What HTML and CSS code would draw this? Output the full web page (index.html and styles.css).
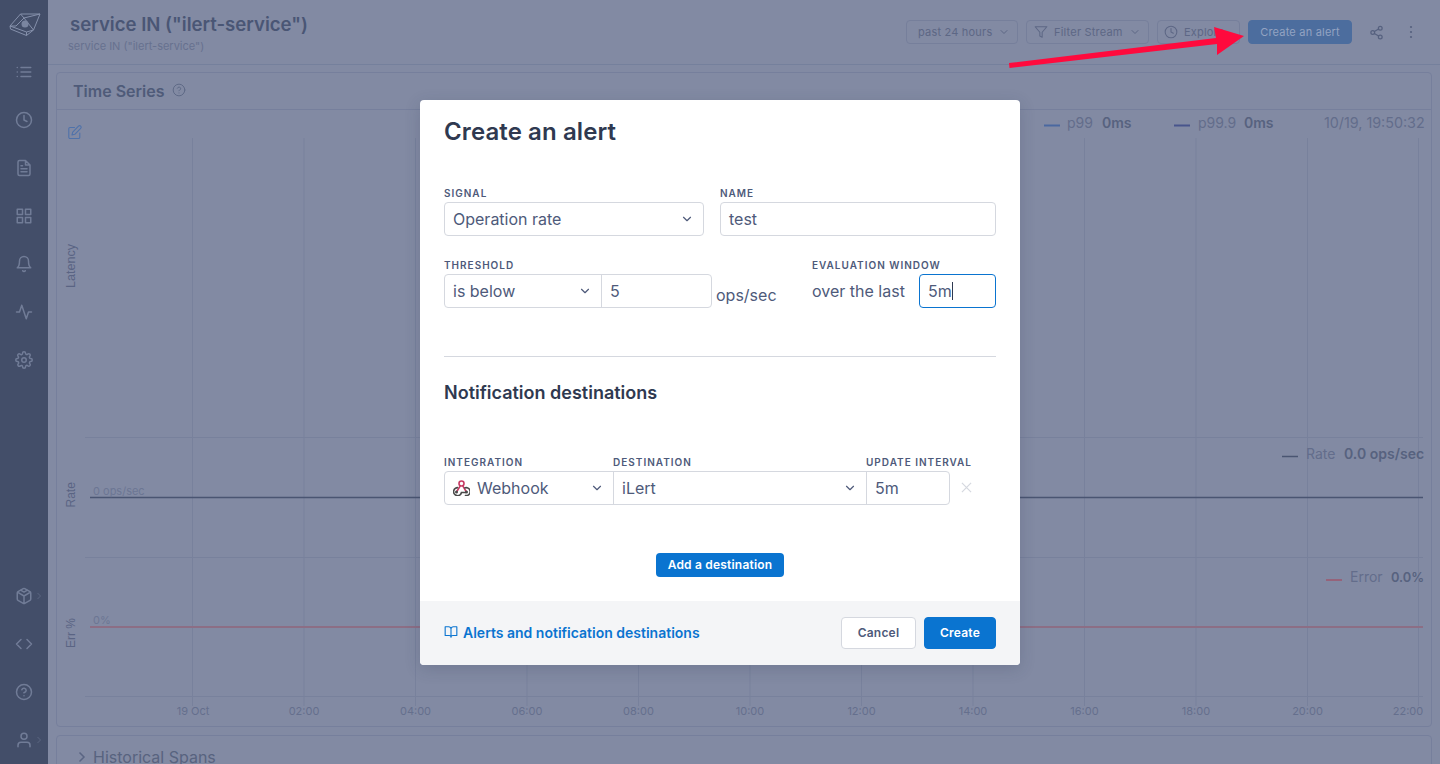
FILE: index.html
```html
<!DOCTYPE html>
<html lang="en">
<head>
<meta charset="utf-8">
<title>Create an alert</title>
<link rel="stylesheet" href="styles.css">
</head>
<body>
<div class="app">
  <nav class="sidebar">
    <div class="nav-group">
      <div class="nav-item"><svg class="logo" width="34" height="26" viewBox="0 0 34 26"><path d="M1 15 11.500 3H31l-6.500 16-7 5.500-16-6.500zM11.500 3 15 7 31 3M15 7l9.500 12M15 7 7 15 1 15M1 15 17.500 21l7-2M17.500 21v3.500"/><circle cx="16" cy="13" r="3.500"/></svg></div>
      <div class="nav-item"><svg class="ico" viewBox="0 0 24 24"><path d="M8 6h13M8 12h13M8 18h13M3 6h.01M3 12h.01M3 18h.01"/></svg></div>
      <div class="nav-item"><svg class="ico" viewBox="0 0 24 24"><circle cx="12" cy="12" r="10"/><path d="M12 6v6l4 2"/></svg></div>
      <div class="nav-item"><svg class="ico" viewBox="0 0 24 24"><path d="M14 2H6a2 2 0 0 0-2 2v16a2 2 0 0 0 2 2h12a2 2 0 0 0 2-2V8zM14 2v6h6M16 13H8M16 17H8M10 9H8"/></svg></div>
      <div class="nav-item"><svg class="ico" viewBox="0 0 24 24"><rect x="3" y="3" width="7" height="7"/><rect x="14" y="3" width="7" height="7"/><rect x="14" y="14" width="7" height="7"/><rect x="3" y="14" width="7" height="7"/></svg></div>
      <div class="nav-item"><svg class="ico" viewBox="0 0 24 24"><path d="M18 8A6 6 0 0 0 6 8c0 7-3 9-3 9h18s-3-2-3-9M13.700 21a2 2 0 0 1-3.400 0"/></svg></div>
      <div class="nav-item"><svg class="ico" viewBox="0 0 24 24"><path d="M22 12h-4l-3 9L9 3l-3 9H2"/></svg></div>
      <div class="nav-item"><svg class="ico" viewBox="0 0 24 24"><circle cx="12" cy="12" r="3"/><path d="M19.400 15a1.650 1.650 0 0 0 .33 1.820l.06.06a2 2 0 1 1-2.830 2.830l-.06-.06a1.650 1.650 0 0 0-2.820 1.170V21a2 2 0 1 1-4 0v-.09a1.650 1.650 0 0 0-2.820-1.170l-.06.06a2 2 0 1 1-2.830-2.830l.06-.06a1.650 1.650 0 0 0-1.170-2.820H3a2 2 0 1 1 0-4h.09a1.650 1.650 0 0 0 1.170-2.820l-.06-.06a2 2 0 1 1 2.830-2.830l.06.06a1.650 1.650 0 0 0 1.820.33H9a1.650 1.650 0 0 0 1-1.510V3a2 2 0 1 1 4 0v.09a1.650 1.650 0 0 0 2.820 1.170l.06-.06a2 2 0 1 1 2.830 2.830l-.06.06a1.650 1.650 0 0 0-.33 1.820V9a1.650 1.650 0 0 0 1.510 1H21a2 2 0 1 1 0 4h-.09a1.650 1.650 0 0 0-1.510 1z"/></svg></div>
    </div>
    <div class="nav-group">
      <div class="nav-item"><svg class="ico" viewBox="0 0 24 24"><path d="M21 16V8a2 2 0 0 0-1-1.730l-7-4a2 2 0 0 0-2 0l-7 4A2 2 0 0 0 3 8v8a2 2 0 0 0 1 1.730l7 4a2 2 0 0 0 2 0l7-4A2 2 0 0 0 21 16zM7.500 4.210l4.500 2.600 4.500-2.600M3.270 6.960 12 12.010l8.730-5.050M12 22.080V12"/></svg><svg class="nav-more" viewBox="0 0 6 8"><path d="M1.500 1 4.500 4 1.500 7"/></svg></div>
      <div class="nav-item"><svg class="ico" viewBox="0 0 24 24"><path d="M16 18l6-6-6-6M8 6l-6 6 6 6"/></svg></div>
      <div class="nav-item"><svg class="ico" viewBox="0 0 24 24"><circle cx="12" cy="12" r="10"/><path d="M9.090 9a3 3 0 0 1 5.830 1c0 2-3 3-3 3M12 17h.01"/></svg></div>
      <div class="nav-item"><svg class="ico" viewBox="0 0 24 24"><path d="M20 21v-2a4 4 0 0 0-4-4H8a4 4 0 0 0-4 4v2"/><circle cx="12" cy="7" r="4"/></svg><svg class="nav-more" viewBox="0 0 6 8"><path d="M1.500 1 4.500 4 1.500 7"/></svg></div>
    </div>
  </nav>

  <main class="main">
    <header class="topbar">
      <div class="heading">
        <h1 class="page-title">service IN ("ilert-service")</h1>
        <div class="page-sub">service IN ("ilert-service")</div>
      </div>
      <div class="actions">
        <div class="btn btn-range">past 24 hours <svg class="chev" viewBox="0 0 24 24"><path d="M6 9l6 6 6-6"/></svg></div>
        <div class="btn btn-filter"><svg class="btn-ico" viewBox="0 0 24 24"><path d="M22 3H2l8 9.460V19l4 2v-8.540z"/></svg>Filter Stream <svg class="chev" viewBox="0 0 24 24"><path d="M6 9l6 6 6-6"/></svg></div>
        <div class="btn btn-explore"><svg class="btn-ico" viewBox="0 0 24 24"><circle cx="12" cy="12" r="10"/><path d="M12 6v6l4 2"/></svg>Explore</div>
        <div class="btn btn-primary">Create an alert</div>
        <svg class="tool share" viewBox="0 0 24 24"><circle cx="18" cy="5" r="3"/><circle cx="6" cy="12" r="3"/><circle cx="18" cy="19" r="3"/><path d="M8.590 13.510l6.830 3.980M15.410 6.510l-6.820 3.980"/></svg>
        <svg class="tool dots" viewBox="0 0 4 14"><circle cx="2" cy="2" r="1.100"/><circle cx="2" cy="7" r="1.100"/><circle cx="2" cy="12" r="1.100"/></svg>
      </div>
    </header>

    <section class="panel panel-chart">
      <div class="panel-head">
        <h2 class="panel-title">Time Series</h2>
        <svg class="help" viewBox="0 0 24 24"><circle cx="12" cy="12" r="10"/><path d="M9.090 9a3 3 0 0 1 5.830 1c0 2-3 3-3 3M12 17h.01"/></svg>
      </div>
      <svg class="chart" viewBox="57 110 1374 615" width="1374" height="615">
        <g class="grid">
          <path d="M192.500 138V706M304 138V706M415.500 138V706M527 138V706M638.500 138V706M750 138V706M861.500 138V706M973 138V706M1084.500 138V706M1196 138V706M1307.500 138V706M1418.500 138V706"/>
          <path d="M85 437.500H1423M85 557.500H1423M85 696.500H1423"/>
        </g>
        <path class="series-rate" d="M90 497.500H1423"/>
        <path class="series-err" d="M90 627H1423"/>
        <g class="edit" transform="translate(68 125)">
          <path d="M6.500 2.500H2A1.200 1.200 0 0 0 .8 3.700v8.600A1.200 1.200 0 0 0 2 13.500h8.600a1.200 1.200 0 0 0 1.200-1.200V8M10.500 1.200a1.400 1.400 0 0 1 2.200 2.200L6.800 9.300l-2.800.7.700-2.800z"/>
        </g>
        <g class="axis-side">
          <text class="lat" transform="translate(75 288) rotate(-90)">Latency</text>
          <text transform="translate(75 507.500) rotate(-90)">Rate</text>
          <text transform="translate(75 648) rotate(-90)">Err %</text>
        </g>
        <g class="axis-value">
          <text x="93" y="495">0 ops/sec</text>
          <text x="93" y="624">0%</text>
        </g>
        <g class="axis-time">
          <text x="193" y="715">19 Oct</text><text x="304" y="715">02:00</text><text x="415.500" y="715">04:00</text><text x="527" y="715">06:00</text><text x="638.500" y="715">08:00</text><text x="750" y="715">10:00</text><text x="861.500" y="715">12:00</text><text x="973" y="715">14:00</text><text x="1084.500" y="715">16:00</text><text x="1196" y="715">18:00</text><text x="1307.500" y="715">20:00</text><text x="1408" y="715">22:00</text>
        </g>
        <g class="legend">
          <path class="key-p99" d="M1044 125.500H1060"/><text x="1067" y="128">p99</text><text class="val" x="1102" y="128">0ms</text>
          <path class="key-p999" d="M1174 125.500H1190"/><text x="1198" y="128">p99.9</text><text class="val" x="1244" y="128">0ms</text>
          <text class="stamp" x="1324" y="127.500">10/19, 19:50:32</text>
          <path class="series-rate" d="M1282 456.500H1298"/><text x="1306" y="459">Rate</text><text class="val" x="1344" y="459">0.0 ops/sec</text>
          <path class="key-err" d="M1326 580H1342"/><text x="1350" y="582">Error</text><text class="val val-pct" x="1391" y="582">0.0%</text>
        </g>
      </svg>
    </section>

    <section class="panel panel-spans">
      <svg class="expand" viewBox="0 0 8 12"><path d="M1.500 1.500 6 6l-4.500 4.500"/></svg>
      <h2 class="spans-title">Historical Spans</h2>
    </section>
  </main>
</div>

<svg class="arrow" viewBox="0 0 250 50" width="250" height="50"><path d="M9 41 216 16 214 5 244 14 217 33 217 22 9.500 46z"/></svg>

<div class="modal" role="dialog">
  <div class="modal-body">
    <h2 class="modal-title">Create an alert</h2>
    <div class="row row-signal">
      <div class="field field-signal">
        <div class="label">Signal</div>
        <div class="control select"><span>Operation rate</span><svg class="caret" viewBox="0 0 24 24"><path d="M6 9l6 6 6-6"/></svg></div>
      </div>
      <div class="field field-name">
        <div class="label">Name</div>
        <div class="control">test</div>
      </div>
    </div>
    <div class="row row-threshold">
      <div class="field">
        <div class="label">Threshold</div>
        <div class="inline">
          <div class="joined threshold">
            <div class="cell select w-below"><span>is below</span><svg class="caret" viewBox="0 0 24 24"><path d="M6 9l6 6 6-6"/></svg></div>
            <div class="cell grow">5</div>
          </div>
          <span class="unit">ops/sec</span>
        </div>
      </div>
      <div class="field field-window">
        <div class="label">Evaluation window</div>
        <div class="inline window">
          <span class="over">over the last</span>
          <div class="control focused">5m<i class="cursor"></i></div>
        </div>
      </div>
    </div>
    <hr class="rule">
    <h3 class="section-title">Notification destinations</h3>
    <div class="dest-labels">
      <div class="label w-int">Integration</div>
      <div class="label w-dest">Destination</div>
      <div class="label">Update interval</div>
    </div>
    <div class="dest-row">
      <div class="joined dest">
        <div class="cell select w-int">
          <svg class="hook" viewBox="0 0 17 16"><circle class="hook-ring" cx="8.500" cy="3.500" r="2.500"/><path class="hook-pink" d="M7.300 5.800 3.500 12M9.700 5.800 13.500 12"/><path class="hook-dark" d="M5.200 7.700A4 4 0 1 0 8.500 12.500H13"/><path class="hook-dark" d="M11.300 8.100A4 4 0 1 1 11.800 15.400"/><circle class="hook-dot" cx="3.500" cy="12" r="1.500"/><circle class="hook-dot" cx="13.500" cy="12" r="1.500"/></svg>
          <span class="grow">Webhook</span><svg class="caret" viewBox="0 0 24 24"><path d="M6 9l6 6 6-6"/></svg>
        </div>
        <div class="cell select w-dest"><span>iLert</span><svg class="caret" viewBox="0 0 24 24"><path d="M6 9l6 6 6-6"/></svg></div>
        <div class="cell grow">5m</div>
      </div>
      <svg class="remove" viewBox="0 0 12 12"><path d="M1 1l10 10M11 1 1 11"/></svg>
    </div>
    <div class="add-row"><div class="btn-add">Add a destination</div></div>
  </div>
  <footer class="modal-foot">
    <div class="doc-link"><svg class="book" viewBox="0 0 24 24"><path d="M2 3h6a4 4 0 0 1 4 4v14a3 3 0 0 0-3-3H2zM22 3h-6a4 4 0 0 0-4 4v14a3 3 0 0 1 3-3h7z"/></svg>Alerts and notification destinations</div>
    <div class="foot-actions">
      <div class="btn-cancel">Cancel</div>
      <div class="btn-create">Create</div>
    </div>
  </footer>
</div>
</body>
</html>
```

FILE: styles.css
```css
* { box-sizing: border-box; }
html, body { margin: 0; height: 100%; overflow: hidden; }
body { font-family: Inter, "Liberation Sans", sans-serif; background: #828aa3; color: #4a5675; }
h1, h2, h3 { margin: 0; }

.app { display: flex; height: 764px; overflow: hidden; }

/* sidebar */
.sidebar { width: 48px; flex: none; background: #434e69; display: flex; flex-direction: column; justify-content: space-between; }
.nav-item { height: 48px; display: flex; align-items: center; justify-content: center; position: relative; }
.ico { width: 18px; height: 18px; fill: none; stroke: #717c97; stroke-width: 2; stroke-linecap: round; stroke-linejoin: round; }
.logo { margin-left: 3px; fill: none; stroke: #8590ab; stroke-width: 1; stroke-linejoin: round; }
.logo circle { fill: #7a85a0; stroke: none; }
.nav-more { position: absolute; left: 36px; top: 20px; width: 6px; height: 8px; fill: none; stroke: #5b6681; stroke-width: 1; }

/* top bar */
.main { flex: 1; min-width: 0; padding: 0 8px; }
.topbar { height: 65px; margin: 0 -8px; padding: 0 16px 0 20px; border-bottom: 1px solid #75809c; display: flex; justify-content: space-between; }
.heading { padding-top: 12px; }
.page-title { font-size: 18.600px; line-height: 24px; font-weight: 600; color: #4a5675; margin-left: 2px; }
.page-sub { font-size: 11px; line-height: 14px; margin-top: 3px; color: #67718f; }
.actions { display: flex; align-items: center; height: 64px; }
.btn { height: 24px; border: 1px solid #767f9b; border-radius: 4px; font-size: 11px; letter-spacing: .2px; color: #5d6785; display: flex; align-items: center; padding-left: 11px; margin-right: 8px; white-space: nowrap; }
.btn-range { width: 112px; }
.btn-filter { width: 123px; padding-left: 7px; }
.btn-explore { width: 83px; padding-left: 6px; }
.btn-primary { width: 104px; padding-left: 0; justify-content: center; margin-right: 17px; background: #4c6d9e; border-color: #4c6d9e; color: #93a3c2; }
.chev { width: 12px; height: 12px; margin-left: 6px; fill: none; stroke: currentColor; stroke-width: 2; stroke-linecap: round; stroke-linejoin: round; }
.btn-ico { width: 14px; height: 14px; margin-right: 6px; fill: none; stroke: currentColor; stroke-width: 1.800; stroke-linecap: round; stroke-linejoin: round; }
.tool.share { width: 15px; height: 15px; fill: none; stroke: #56617f; stroke-width: 2; stroke-linecap: round; }
.tool.dots { width: 4px; height: 14px; margin-left: 25px; margin-right: 11px; fill: #56617f; }

/* panels */
.panel { border: 1px solid #767f9c; border-radius: 4px; }
.panel-chart { margin-top: 7px; height: 655px; }
.panel-head { height: 37px; border-bottom: 1px solid #767f9c; display: flex; align-items: center; padding-left: 16px; }
.panel-title { font-size: 16px; font-weight: 600; color: #4f5b79; }
.help { width: 14px; height: 14px; margin-left: 8px; margin-top: -3px; fill: none; stroke: #5e6986; stroke-width: 1.700; stroke-linecap: round; }
.chart { display: block; font-family: Inter, sans-serif; }
.grid path { fill: none; stroke: #78819c; stroke-width: 1; }
.series-rate { fill: none; stroke: #4a5572; stroke-width: 1.500; }
.series-err { fill: none; stroke: #8c6e85; stroke-width: 2; }
.key-err { fill: none; stroke: #96637a; stroke-width: 2; }
.key-p99 { stroke: #4a68a0; stroke-width: 2; fill: none; }
.key-p999 { stroke: #48558c; stroke-width: 2; fill: none; }
.edit path { fill: none; stroke: #4f72aa; stroke-width: 1.100; stroke-linejoin: round; stroke-linecap: round; }
.axis-side text { font-family: "Liberation Sans", sans-serif; font-size: 12px; fill: #5a6483; }
.axis-side .lat { font-size: 12.600px; }
.axis-value text { font-size: 11px; fill: #6c7693; }
.axis-time text { font-size: 11px; fill: #656f8d; text-anchor: middle; }
.legend text { font-size: 14px; fill: #636d8b; }
.legend .val { font-weight: 600; fill: #57627f; }
.legend .val-pct { font-size: 12.800px; }
.legend .stamp { font-size: 14.300px; }

.panel-spans { margin-top: 8px; height: 60px; display: flex; align-items: flex-start; padding: 12px 0 0 21px; }
.expand { width: 8px; height: 12px; margin-top: 3px; fill: none; stroke: #5a6583; stroke-width: 1.500; }
.spans-title { font-size: 16px; font-weight: 400; line-height: 19px; color: #58637f; margin-left: 7px; }

/* annotation */
.arrow { position: absolute; left: 1000px; top: 22px; fill: #ff0a3d; }

/* modal */
.modal { position: absolute; left: 420px; top: 100px; width: 600px; height: 565px; background: #fff; border-radius: 4px; display: flex; flex-direction: column; justify-content: space-between; box-shadow: 0 4px 16px rgba(40, 50, 80, .18); }
.modal-body { padding: 17px 24px 0; }
.modal-title { font-size: 24px; line-height: 29px; font-weight: 600; letter-spacing: .1px; color: #2f3950; }
.row { display: flex; }
.row-signal { margin-top: 41px; gap: 16px; }
.row-threshold { margin-top: 23px; justify-content: space-between; }
.field-signal { width: 260px; }
.field-name { flex: 1; }
.label { font-size: 10px; line-height: 12px; font-weight: 600; letter-spacing: 1px; text-transform: uppercase; color: #4e5a7a; white-space: nowrap; }
.control { height: 34px; margin-top: 3px; border: 1px solid #d5d8df; border-radius: 4px; font-size: 16px; line-height: 32px; padding: 0 8px; color: #4e5a7a; display: flex; align-items: center; justify-content: space-between; }
.caret { width: 14px; height: 14px; flex: none; margin-right: 1px; fill: none; stroke: #4e5a7a; stroke-width: 2; stroke-linecap: round; stroke-linejoin: round; }
.select { display: flex; align-items: center; justify-content: space-between; }
.inline { display: flex; align-items: center; margin-top: 3px; }
.joined { height: 34px; border: 1px solid #d5d8df; border-radius: 4px; display: flex; font-size: 16px; color: #4e5a7a; }
.threshold { width: 268px; }
.cell { padding: 0 8px; line-height: 32px; border-right: 1px solid #d5d8df; }
.cell.grow { border-right: 0; flex: 1; }
.w-below { width: 157px; }
.unit { font-size: 16px; margin: 8px 0 0 4px; color: #4e5a7a; }
.field-window { width: 184px; }
.window { justify-content: space-between; }
.over { font-size: 16px; color: #4e5a7a; }
.focused { width: 77px; margin-top: 0; border-color: #0a74d0; justify-content: flex-start; }
.cursor { display: block; width: 1px; height: 18px; background: #2f3950; }
.rule { border: 0; border-top: 1px solid #d5d8df; margin: 48px 0 0; }
.section-title { font-size: 18px; line-height: 22px; font-weight: 600; color: #2f3950; margin-top: 25px; }
.dest-labels { display: flex; margin-top: 52px; }
.label.w-int { width: 169px; }
.label.w-dest { width: 253px; }
.dest-row { display: flex; align-items: center; margin-top: 3px; }
.dest { width: 506px; }
.cell.w-int { width: 169px; }
.cell.w-dest { width: 253px; }
.hook { width: 17px; height: 16px; margin-right: 7px; flex: none; }
.hook path, .hook-ring { fill: none; stroke-width: 1.600; }
.hook-pink, .hook-ring { stroke: #c73a63; }
.hook-dark { stroke: #4a4a4a; }
.hook-dot { fill: #4a4a4a; }
.grow { flex: 1; }
.remove { width: 11px; height: 11px; margin: 0 0 2px 11px; fill: none; stroke: #d5d8df; stroke-width: 1.300; }
.add-row { display: flex; justify-content: center; margin-top: 48px; }
.btn-add { width: 128px; height: 24px; border-radius: 4px; background: #0a74d0; color: #fff; font-size: 12px; font-weight: 600; line-height: 24px; text-align: center; letter-spacing: .2px; }
.modal-foot { height: 64px; background: #f4f5f7; border-radius: 0 0 4px 4px; padding: 0 24px; display: flex; align-items: center; justify-content: space-between; }
.doc-link { display: flex; align-items: center; font-size: 14px; font-weight: 600; color: #0a74d0; padding-bottom: 2px; }
.book { width: 14px; height: 14px; margin-right: 5px; fill: none; stroke: #0a74d0; stroke-width: 1.900; stroke-linejoin: round; }
.foot-actions { display: flex; gap: 8px; }
.btn-cancel, .btn-create { height: 32px; border-radius: 4px; font-size: 12px; font-weight: 600; line-height: 30px; text-align: center; letter-spacing: .2px; }
.btn-cancel { width: 75px; background: #fff; border: 1px solid #d5d8df; color: #4e5a7a; }
.btn-create { width: 72px; background: #0a74d0; border: 1px solid #0a74d0; color: #fff; }
```
